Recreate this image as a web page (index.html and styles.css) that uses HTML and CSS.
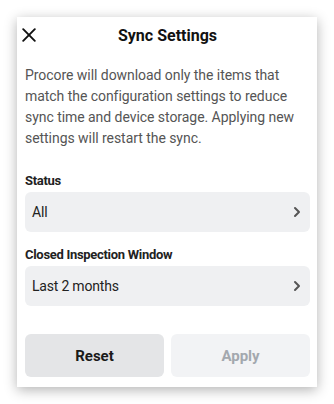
FILE: index.html
```html
<!DOCTYPE html>
<html>
<head>
<meta charset="utf-8">
<link rel="stylesheet" href="styles.css">
</head>
<body>
<div class="card">
  <div class="header">
    <svg class="close" width="14" height="14" viewBox="0 0 14 14"><path d="M1.2 1.2 L12.8 12.8 M12.8 1.2 L1.2 12.8" stroke="#111" stroke-width="1.9" stroke-linecap="round" fill="none"/></svg>
    <div class="title">Sync Settings</div>
  </div>
  <p class="desc">Procore will download only the items that match the configuration settings to reduce sync time and device storage. Applying new settings will restart the sync.</p>
  <div class="group first">
    <div class="label">Status</div>
    <div class="field"><span>All</span><svg class="chev" width="8" height="12" viewBox="0 0 8 12"><path d="M2 2 L6 6 L2 10" stroke="#555" stroke-width="2" fill="none" stroke-linecap="round" stroke-linejoin="round"/></svg></div>
  </div>
  <div class="group">
    <div class="label">Closed Inspection Window</div>
    <div class="field"><span>Last 2 months</span><svg class="chev" width="8" height="12" viewBox="0 0 8 12"><path d="M2 2 L6 6 L2 10" stroke="#555" stroke-width="2" fill="none" stroke-linecap="round" stroke-linejoin="round"/></svg></div>
  </div>
  <div class="actions">
    <div class="btn reset">Reset</div>
    <div class="btn apply">Apply</div>
  </div>
</div>
</body>
</html>
```
FILE: styles.css
```css
html, body { margin: 0; padding: 0; background: #fff; }
body { width: 334px; height: 404px; overflow: hidden; font-family: Roboto, "Liberation Sans", sans-serif; padding: 17px 0 0 17px; box-sizing: border-box; }
.card {
  width: 300px;
  background: #fff;
  box-shadow: 0 3px 12px rgba(0,0,0,0.3);
  box-sizing: border-box;
  padding: 0 7px 10px 8px;
  display: flex;
  flex-direction: column;
}
.card > * { flex-shrink: 0; }
.header {
  position: relative;
  height: 36px;
  display: flex;
  align-items: center;
  justify-content: center;
}
.close { position: absolute; left: -3px; top: 11px; }
.title { font-size: 16px; font-weight: 700; color: #111; }
.desc {
  margin: 12px 0 0 0;
  font-size: 14px;
  line-height: 21px;
  color: #555;
  letter-spacing: -0.05px;
}
.group { display: flex; flex-direction: column; }
.group.first { margin-top: 22px; }
.group + .group { margin-top: 13px; }
.label { font-size: 13px; font-weight: 700; color: #222; line-height: 20px; margin-bottom: 1px; letter-spacing: -0.3px; }
.field {
  height: 40px;
  background: #eff0f2;
  border-radius: 6px;
  display: flex;
  align-items: center;
  justify-content: space-between;
  padding: 0 9px 0 7px;
  font-size: 14px;
  color: #222;
  letter-spacing: -0.2px;
}
.actions {
  margin-top: 28px;
  display: flex;
  gap: 7px;
}
.btn {
  flex: 1;
  height: 43px;
  border-radius: 6px;
  display: flex;
  align-items: center;
  justify-content: center;
  font-size: 15px;
  font-weight: 700;
}
.reset { background: #e4e5e7; color: #1a1a1a; }
.apply { background: #f2f3f5; color: #a3a8ae; }
```
